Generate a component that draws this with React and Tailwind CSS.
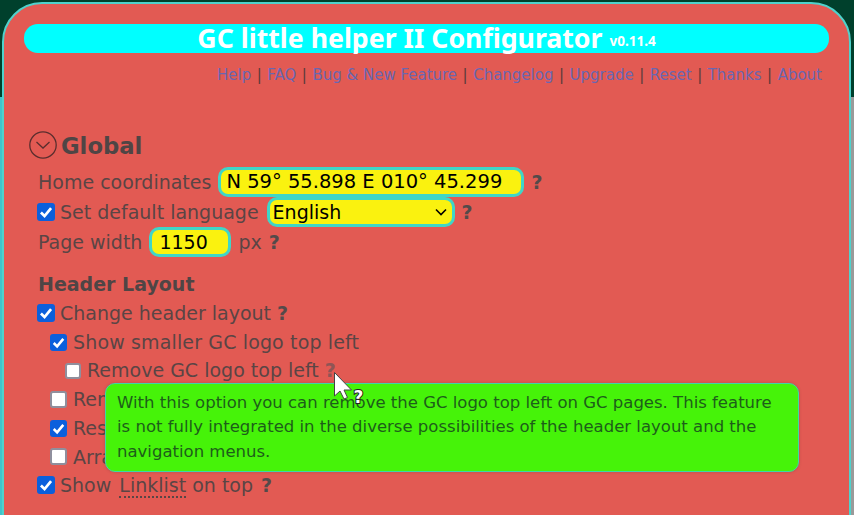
const FONT = 'font-["DejaVu_Sans",sans-serif]';

const links = ['Help', 'FAQ', 'Bug & New Feature', 'Changelog', 'Upgrade', 'Reset', 'Thanks', 'About'];

function Help({ inline }) {
  return <span className={`font-bold text-[#544a4a] ${inline ? '' : 'ml-[7px]'}`}>?</span>;
}

function Check({ checked, size = 'h-[18px] w-[18px]' }) {
  if (!checked) {
    return <span className={`shrink-0 rounded-[3px] border-2 border-[#8f8f9d] bg-white ${size}`} />;
  }
  return (
    <span className={`flex shrink-0 items-center justify-center rounded-[3px] bg-[#0b5fdc] ${size}`}>
      <svg viewBox="0 0 16 16" className="h-full w-full" fill="none" stroke="white" strokeWidth="2.4">
        <path d="M3.5 8.5 L6.7 11.6 L12.5 4.6" />
      </svg>
    </span>
  );
}

function Row({ indent = '-ml-px gap-[5px]', size, checked, children }) {
  return (
    <div className={`flex h-[28.7px] items-center ${indent}`}>
      <Check checked={checked} size={size} />
      <span className="whitespace-nowrap">{children}</span>
    </div>
  );
}

function Field({ className, children }) {
  return (
    <span className={`flex h-[30px] items-center rounded-[10px] border-[3px] border-[#3fd6c8] bg-[#faf20f] text-black ${className}`}>
      {children}
    </span>
  );
}

export default function App() {
  return (
    <div className={`relative h-[515px] w-[854px] overflow-hidden bg-[#00402c] pl-[2px] pr-[3px] pt-[2px] ${FONT}`}>
      {/* page behind the dialog shows at both edges below the header */}
      <div className="absolute bottom-0 left-0 top-[97px] w-[3px] bg-[#3fc4cc]" />
      <div className="absolute bottom-0 right-0 top-[97px] w-[3px] bg-[#9a9a9a]" />

      <div className="relative h-[560px] rounded-t-[40px] border-2 border-[#4fd2cc] bg-[#e25a53] px-[20px] pt-[20px] text-[19px] text-[#5a4545]">
        <div className="flex h-[29px] items-center justify-center rounded-[14px] bg-[#00ffff] font-['Noto_Sans',sans-serif] font-bold text-white">
          <span className="text-[26.7px] leading-none">GC little helper II Configurator</span>
          <span className="ml-[7px] mt-[6px] text-[13.5px] leading-none">v0.11.4</span>
        </div>

        <div className="mt-[12px] flex justify-end whitespace-nowrap pr-[7px] text-[15px] leading-[20px]">
          {links.map((link, i) => (
            <span key={link}>
              {i > 0 && <span className="mx-[5.5px] text-[#5a3a3a]">|</span>}
              <span className="text-[#6a66b0]">{link}</span>
            </span>
          ))}
        </div>

        <div className="mt-[46px] flex h-[30px] items-center pl-[5px]">
          <svg viewBox="0 0 28 28" className="mb-[3px] h-[28px] w-[28px]" fill="none" stroke="#5a2e2e" strokeWidth="1.3">
            <circle cx="14" cy="14" r="13.2" />
            <path d="M7.5 11 L14 17 L20.5 11" />
          </svg>
          <span className="ml-[4px] text-[22.7px] font-bold text-[#4f4545]">Global</span>
        </div>

        <div className="pl-[14px]">
          <div className="mt-[6px] flex h-[30px] items-center whitespace-nowrap">
            Home coordinates
            <Field className="ml-[7px] w-[306px] pl-[5px] text-[19.5px]">N 59° 55.898 E 010° 45.299</Field>
            <Help />
          </div>
          <div className="-ml-px flex h-[30px] items-center whitespace-nowrap">
            <Check checked />
            <span className="ml-[5px]">Set default language</span>
            <Field className="ml-[8px] w-[188px] justify-between pl-[3px] pr-[5px]">
              English
              <svg viewBox="0 0 12 8" className="h-2 w-3" fill="none" stroke="black" strokeWidth="1.6">
                <path d="M1 1.5 L6 6.5 L11 1.5" />
              </svg>
            </Field>
            <Help />
          </div>
          <div className="flex h-[30px] items-center whitespace-nowrap">
            Page width
            <Field className="ml-[7px] w-[82px] pl-[7px]">1150</Field>
            <span className="ml-[7px]">px</span>
            <Help />
          </div>

          <div className="mt-[13px] h-[29px] font-bold leading-[28px] text-[#4f4545]">Header Layout</div>

          <Row checked>Change header layout <Help inline /></Row>
          <Row indent="gap-[6px] pl-[12px]" size="h-[17px] w-[17px]" checked>
            <span className="tracking-[0.14px]">Show smaller GC logo top left</span>
          </Row>
          <Row indent="gap-[6px] pl-[27px]" size="h-[16px] w-[16px]">
            Remove GC logo top left <span className="font-bold text-[#8e5555]">?</span>
          </Row>
          <Row indent="gap-[6px] pl-[12px]" size="h-[17px] w-[17px]">Remove</Row>
          <Row indent="gap-[6px] pl-[12px]" size="h-[17px] w-[17px]" checked>Resize</Row>
          <Row indent="gap-[6px] pl-[12px]" size="h-[17px] w-[17px]">Arrange</Row>
          <Row checked>
            Show <span className="ml-[2px] border-b-2 border-dotted border-[#5a4545]">Linklist</span> on top{' '}
            <span className="ml-[2px]"><Help inline /></span>
          </Row>
        </div>

        <div className="absolute left-[101px] top-[379px] h-[89px] w-[694px] rounded-[10px] border border-[#3fd6a8] bg-[#46f309] px-[11px] py-[7px] text-[16.5px] leading-[24.4px] text-[#1d5e1a] shadow-[0_0_3px_rgba(90,60,60,0.35)]">
          With this option you can remove the GC logo top left on GC pages. This feature is not fully integrated in the diverse possibilities of the header layout and the navigation menus.
        </div>

        <svg viewBox="0 0 32 36" className="absolute left-[329.5px] top-[367.5px] h-[36px] w-[32px]">
          <path d="M0.5 0.5 L0.5 24 L6 19 L10 27 L13.5 25.5 L10 18 L17.5 18 Z" fill="white" stroke="#444" strokeWidth="1" />
          <text x="19.5" y="31" fontSize="17" fontWeight="bold" fill="white" stroke="#222" strokeWidth="2" paintOrder="stroke">?</text>
        </svg>
      </div>
    </div>
  );
}
